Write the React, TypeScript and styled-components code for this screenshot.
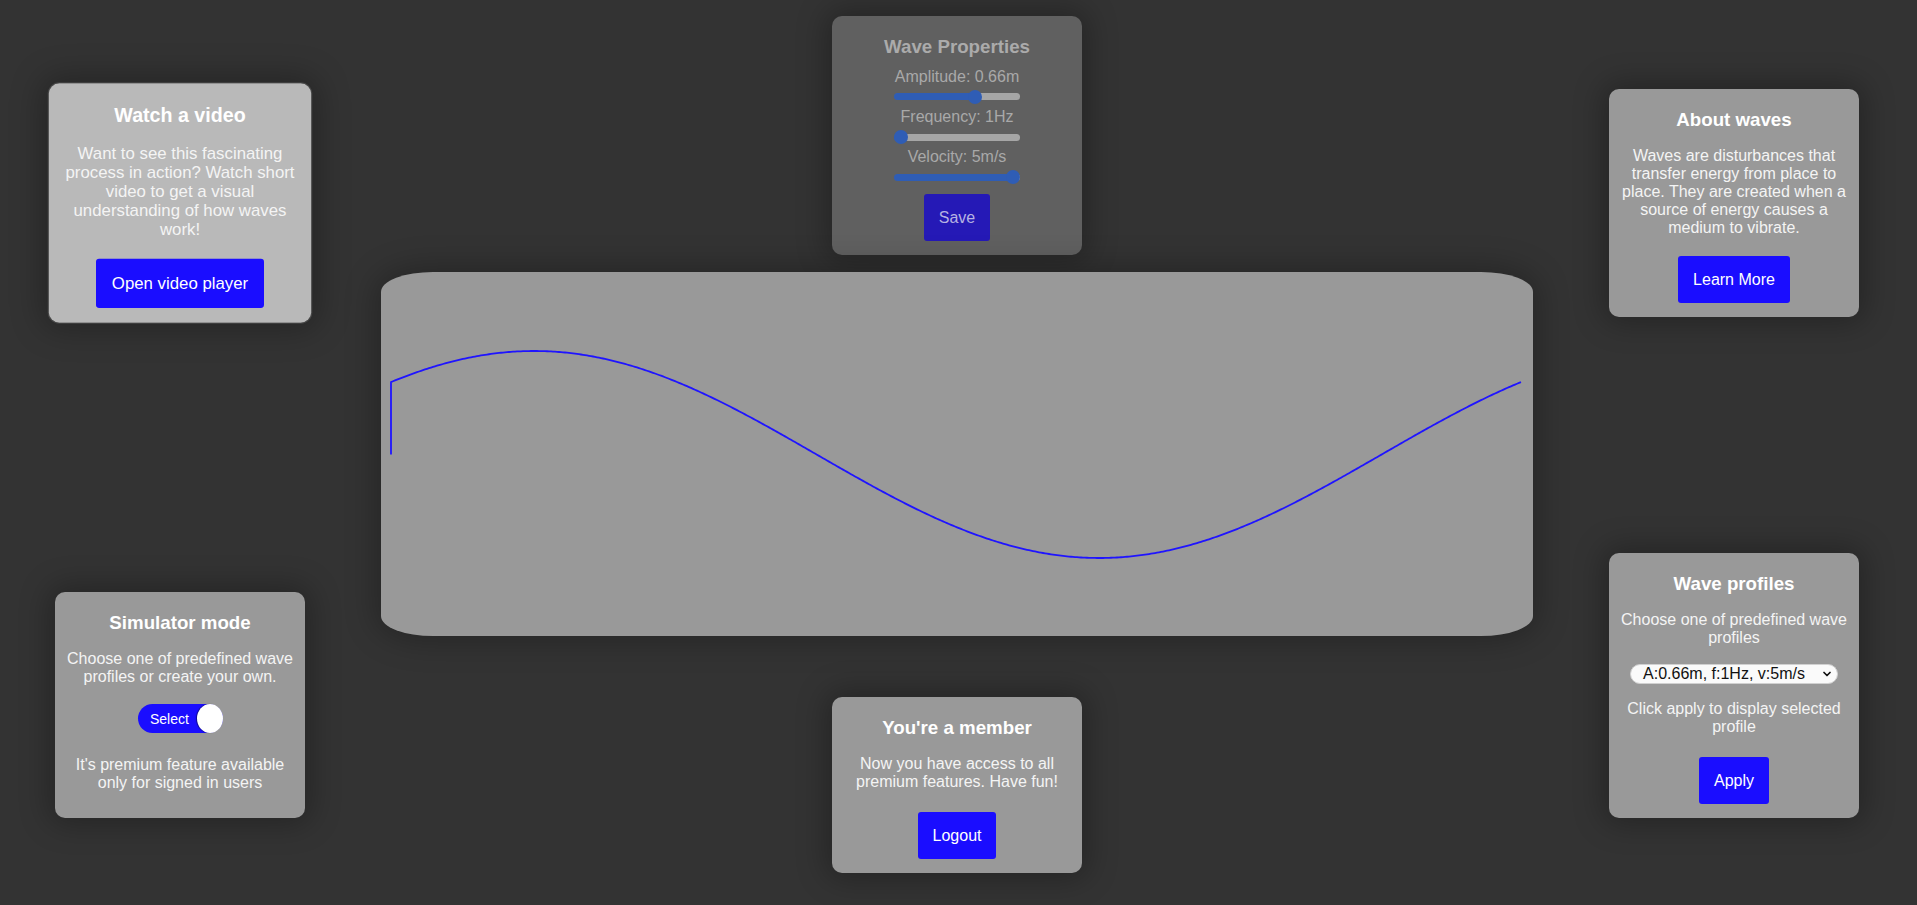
import React from 'react'
import styled, { createGlobalStyle, css } from 'styled-components'
import { ChevronDown } from 'lucide-react'

const GlobalStyle = createGlobalStyle`
    html, body {
        margin: 0;
        padding: 0;
        background: #333333;
        overflow: hidden;
    }
    body {
        font-family: "Liberation Sans", Arial, sans-serif;
    }
`

const Page = styled.div`
    display: flex;
    justify-content: space-between;
    box-sizing: border-box;
    height: 905px;
    padding: 0 58px 0 55px;
`

const SideColumn = styled.div`
    display: flex;
    flex-direction: column;
    justify-content: space-between;
    box-sizing: border-box;
    width: 250px;
    height: 100%;
    padding: 89px 0 87px;
`

const CenterColumn = styled.div`
    flex: 1;
    display: flex;
    flex-direction: column;
    align-items: center;
    padding-top: 16px;
`

const Card = styled.div<{ $variant?: 'default' | 'hover' | 'dim' }>`
    box-sizing: border-box;
    width: 250px;
    padding: 20px 10px 10px;
    display: flex;
    flex-direction: column;
    align-items: center;
    text-align: center;
    background: #999999;
    color: #ffffff;
    border-radius: 10px;
    box-shadow: 0 0 30px 6px rgba(0, 0, 0, 0.28);
    ${(p) =>
        p.$variant === 'hover' &&
        css`
            background: #b9b9b9;
            transform: scale(1.05);
            outline: 1px solid rgba(120, 120, 120, 0.35);
        `}
    ${(p) =>
        p.$variant === 'dim' &&
        css`
            background: #606060;
            color: #ababab;
        `}
`

const Title = styled.h3<{ $tight?: boolean }>`
    margin: 0 0 ${(p) => (p.$tight ? '9.5px' : '16px')};
    font-size: 18.72px;
    font-weight: bold;
    line-height: normal;
`

const Text = styled.p<{ $mb?: number }>`
    margin: 0 0 ${(p) => (p.$mb ?? 18)}px;
    font-size: 16px;
    line-height: normal;
    color: #f4f4f4;
`

const Button = styled.button<{ $dim?: boolean; $mb?: number; $mt?: number }>`
    margin: ${(p) => p.$mt ?? 1}px 0 ${(p) => p.$mb ?? 4}px;
    padding: 14px 15px;
    border: none;
    border-radius: 3px;
    background: ${(p) => (p.$dim ? '#2519b6' : '#1a0dff')};
    color: ${(p) => (p.$dim ? '#b6b2e2' : '#ffffff')};
    font-family: "Liberation Sans", Arial, sans-serif;
    font-size: 16px;
    line-height: 19px;
    cursor: pointer;
`

const SliderLabel = styled.div`
    font-size: 16px;
    line-height: normal;
    color: #a9a9a9;
`

const Slider = styled.input.attrs({ type: 'range' })<{ $pct: number }>`
    -webkit-appearance: none;
    appearance: none;
    display: block;
    width: 126px;
    height: 17.6px;
    margin: 2.4px auto;
    padding: 0;
    background: transparent;

    &::-webkit-slider-runnable-track {
        height: 7px;
        border-radius: 4px;
        background: linear-gradient(
            to right,
            #2f5db5 0,
            #2f5db5 calc(7px + ${(p) => p.$pct} * 112px),
            #a6a6a6 calc(7px + ${(p) => p.$pct} * 112px),
            #a6a6a6 100%
        );
    }
    &::-webkit-slider-thumb {
        -webkit-appearance: none;
        width: 14px;
        height: 14px;
        margin-top: -3.5px;
        border-radius: 50%;
        background: #2f5db5;
        border: none;
    }
`

const Toggle = styled.label`
    box-sizing: border-box;
    display: flex;
    align-items: center;
    justify-content: space-between;
    width: 85px;
    height: 29px;
    margin-bottom: 23px;
    padding-left: 12.5px;
    border-radius: 15px;
    background: #1a0dff;
    color: #ffffff;
    font-size: 14px;
    cursor: pointer;
`

const Knob = styled.span`
    width: 26px;
    height: 29px;
    border-radius: 50%;
    background: #ffffff;
    box-shadow: -1px 0 1px rgba(0, 0, 0, 0.45);
`

const SelectWrap = styled.div`
    position: relative;
    width: 208px;
    margin-bottom: 16px;
`

const Select = styled.select`
    -webkit-appearance: none;
    appearance: none;
    box-sizing: border-box;
    width: 100%;
    height: 20px;
    padding: 0 20px 0 0;
    border: 1px solid #d0d0d0;
    border-radius: 10px;
    background: #fafafa;
    color: #111111;
    font-family: "Liberation Sans", Arial, sans-serif;
    font-size: 16px;
    line-height: 18px;
    text-align: center;
    text-align-last: center;
`

const Chevron = styled.span`
    position: absolute;
    right: 5px;
    top: 50%;
    transform: translateY(-50%);
    display: flex;
    color: #111111;
    pointer-events: none;
`

const WaveCanvas = styled.div`
    width: 1152px;
    height: 364px;
    margin: 17px 0 61px;
    background: #999999;
    border-radius: 52px / 20px;
    box-shadow: 0 0 30px 6px rgba(0, 0, 0, 0.25);
    overflow: hidden;
`

const WaveSvg = styled.svg`
    display: block;
`

const buildWave = (width: number, height: number) => {
    const x0 = 10
    const x1 = width - 12
    const mid = height / 2
    const amp = 103.5
    const phase = 0.775
    const k = (2 * Math.PI) / (x1 - x0)
    let d = `M${x0} ${mid}`
    for (let x = x0; x <= x1; x += 2) {
        const y = mid - amp * Math.sin(phase + (x - x0) * k)
        d += ` L${x} ${y.toFixed(2)}`
    }
    return d
}

const App: React.FC = () => {
    const wave = buildWave(1152, 365)
    return (
        <>
            <GlobalStyle />
            <Page>
                <SideColumn>
                    <Card $variant="hover">
                        <Title>Watch a video</Title>
                        <Text>
                            Want to see this fascinating process in action? Watch short video to get a visual
                            understanding of how waves work!
                        </Text>
                        <Button>Open video player</Button>
                    </Card>
                    <Card>
                        <Title>Simulator mode</Title>
                        <Text $mb={18.5}>Choose one of predefined wave profiles or create your own.</Text>
                        <Toggle>
                            Select
                            <Knob />
                        </Toggle>
                        <Text $mb={16}>It's premium feature available only for signed in users</Text>
                    </Card>
                </SideColumn>

                <CenterColumn>
                    <Card $variant="dim">
                        <Title $tight>Wave Properties</Title>
                        <SliderLabel>Amplitude: 0.66m</SliderLabel>
                        <Slider $pct={0.66} min={0} max={1} step={0.01} defaultValue={0.66} />
                        <SliderLabel>Frequency: 1Hz</SliderLabel>
                        <Slider $pct={0} min={1} max={5} step={1} defaultValue={1} />
                        <SliderLabel>Velocity: 5m/s</SliderLabel>
                        <Slider $pct={1} min={1} max={5} step={1} defaultValue={5} />
                        <Button $dim $mt={5.5} $mb={4}>
                            Save
                        </Button>
                    </Card>
                    <WaveCanvas>
                        <WaveSvg width={1152} height={364} viewBox="0 0 1152 364">
                            <path d={wave} fill="none" stroke="#1f14ff" strokeWidth={1.8} strokeLinejoin="round" />
                        </WaveSvg>
                    </WaveCanvas>
                    <Card>
                        <Title>You're a member</Title>
                        <Text $mb={21}>Now you have access to all premium features. Have fun!</Text>
                        <Button $mt={0} $mb={4}>Logout</Button>
                    </Card>
                </CenterColumn>

                <SideColumn>
                    <Card>
                        <Title>About waves</Title>
                        <Text>
                            Waves are disturbances that transfer energy from place to place. They are created when a
                            source of energy causes a medium to vibrate.
                        </Text>
                        <Button>Learn More</Button>
                    </Card>
                    <Card>
                        <Title>Wave profiles</Title>
                        <Text $mb={17}>Choose one of predefined wave profiles</Text>
                        <SelectWrap>
                            <Select defaultValue="a">
                                <option value="a">A:0.66m, f:1Hz, v:5m/s</option>
                                <option value="b">A:1m, f:2Hz, v:3m/s</option>
                            </Select>
                            <Chevron>
                                <ChevronDown size={12} strokeWidth={3.5} />
                            </Chevron>
                        </SelectWrap>
                        <Text $mb={21.5}>Click apply to display selected profile</Text>
                        <Button $mt={0}>Apply</Button>
                    </Card>
                </SideColumn>
            </Page>
        </>
    )
}

export default App
